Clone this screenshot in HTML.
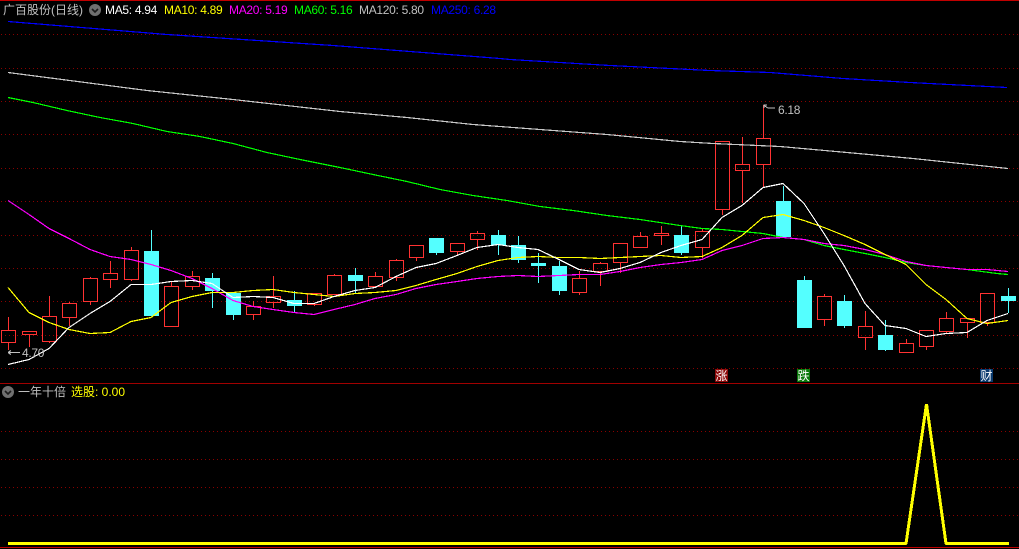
<!DOCTYPE html>
<html>
<head>
<meta charset="utf-8">
<style>
html,body{margin:0;padding:0;background:#000;width:1019px;height:549px;overflow:hidden}
svg{display:block;position:absolute;left:0;top:0}
text{font-family:"Liberation Sans","WenQuanYi Zen Hei","Noto Sans CJK SC",sans-serif;font-size:12px}
.m{letter-spacing:-0.3px}
</style>
</head>
<body>
<svg width="1019" height="549" viewBox="0 0 1019 549">
<rect width="1019" height="549" fill="#000"/>
<!-- frame lines -->
<g shape-rendering="crispEdges">
<rect x="0" y="0" width="1019" height="1" fill="#c00000"/>
<rect x="0" y="383" width="1019" height="1" fill="#a00000"/>
<rect x="0" y="547" width="1019" height="1" fill="#c00000"/>
<path d="M1 34.5H1019M1 68.5H1019M1 101.5H1019M1 134.5H1019M1 168.5H1019M1 201.5H1019M1 235.5H1019M1 268.5H1019M1 301.5H1019M1 335.5H1019M1 368.5H1019M1 431.5H1019M1 459.5H1019M1 487.5H1019M1 515.5H1019" stroke="#8a0000" stroke-width="1" stroke-dasharray="1 3" fill="none"/>
<!-- red wicks -->
<path fill="none" stroke="#ff3232" stroke-width="1" d="M8.5 317V330M8.5 342V350M29.5 334V347M49.5 296V316M49.5 341V343M69.5 302V303M69.5 317V326M90.5 277V278M90.5 301V305M110.5 261V273M110.5 279V288M131.5 247V250M131.5 279V281M171.5 282V286M192.5 271V276M192.5 286V290M253.5 301V306M253.5 314V320M273.5 276V296M273.5 302V308M314.5 304V306M334.5 274V275M375.5 272V276M396.5 259V260M396.5 277V281M416.5 257V261M457.5 251V255M477.5 231V233M477.5 239V250M579.5 271V278M579.5 292V295M600.5 262V263M600.5 271V286M620.5 262V273M640.5 232V236M661.5 226V233M661.5 235V245M702.5 229V231M702.5 247V258M722.5 209V215M742.5 137V164M742.5 170V203M763.5 105V138M763.5 164V187M824.5 294V296M824.5 319V326M865.5 311V326M865.5 337V350M906.5 339V343M926.5 346V350M946.5 312V318M946.5 331V334M967.5 322V338M987.5 322V326"/>
<!-- red bodies -->
<path fill="#ff3232" fill-rule="evenodd" d="M1 330h15v13h-15zM2 331h13v11h-13zM22 331h15v4h-15zM23 332h13v2h-13zM42 316h15v26h-15zM43 317h13v24h-13zM62 303h15v15h-15zM63 304h13v13h-13zM83 278h15v24h-15zM84 279h13v22h-13zM103 273h15v7h-15zM104 274h13v5h-13zM124 250h15v30h-15zM125 251h13v28h-13zM164 286h15v41h-15zM165 287h13v39h-13zM185 276h15v11h-15zM186 277h13v9h-13zM246 306h15v9h-15zM247 307h13v7h-13zM266 296h15v7h-15zM267 297h13v5h-13zM307 293h15v12h-15zM308 294h13v10h-13zM327 275h15v20h-15zM328 276h13v18h-13zM368 276h15v11h-15zM369 277h13v9h-13zM389 260h15v18h-15zM390 261h13v16h-13zM409 245h15v13h-15zM410 246h13v11h-13zM450 243h15v9h-15zM451 244h13v7h-13zM470 233h15v7h-15zM471 234h13v5h-13zM572 278h15v15h-15zM573 279h13v13h-13zM593 263h15v9h-15zM594 264h13v7h-13zM613 243h15v20h-15zM614 244h13v18h-13zM633 236h15v12h-15zM634 237h13v10h-13zM654 233h15v3h-15zM655 234h13v1h-13zM695 231h15v17h-15zM696 232h13v15h-13zM715 141h15v69h-15zM716 142h13v67h-13zM735 164h15v7h-15zM736 165h13v5h-13zM756 138h15v27h-15zM757 139h13v25h-13zM817 296h15v24h-15zM818 297h13v22h-13zM858 326h15v12h-15zM859 327h13v10h-13zM899 343h15v10h-15zM900 344h13v8h-13zM919 330h15v17h-15zM920 331h13v15h-13zM939 318h15v14h-15zM940 319h13v12h-13zM960 318h15v5h-15zM961 319h13v3h-13zM980 293h15v30h-15zM981 294h13v28h-13z"/>
<!-- cyan wicks -->
<path fill="none" stroke="#54ffff" stroke-width="1" d="M151.5 230V251M212.5 273V278M212.5 291V308M233.5 315V320M294.5 291V300M294.5 306V312M355.5 268V275M355.5 281V293M436.5 253V255M498.5 230V235M498.5 245V255M518.5 236V245M518.5 260V263M538.5 253V263M538.5 266V283M559.5 261V266M559.5 291V295M681.5 226V235M681.5 253V255M783.5 186V201M804.5 276V280M844.5 295V301M844.5 326V328M885.5 320V335M885.5 350V351M1008.5 288V296M1008.5 301V313"/>
<!-- cyan bodies -->
<path fill="#54ffff" d="M144 251h15v65h-15zM205 278h15v13h-15zM226 293h15v22h-15zM287 300h15v6h-15zM348 275h15v6h-15zM429 238h15v15h-15zM491 235h15v10h-15zM511 245h15v15h-15zM531 263h15v3h-15zM552 266h15v25h-15zM674 235h15v18h-15zM776 201h15v36h-15zM797 280h15v48h-15zM837 301h15v25h-15zM878 335h15v15h-15zM1001 296h15v5h-15z"/>
<!-- MA250 -->
<polyline fill="none" stroke="#0000ff" stroke-width="1.2" points="8,21.5 167,34.5 333,45.5 500,58.5 510,59.5 610,65.5 710,70.5 770,72.5 843,78.5 910,82.5 1007,87.5"/>
<!-- MA120 -->
<polyline fill="none" stroke="#c8c8c8" stroke-width="1.2" points="8,72.5 147,90.5 233,99.5 340,111.5 407,117.5 473,124.5 540,129.5 607,134.5 680,141.5 713,143.5 780,146.5 847,152.5 913,158.5 1008,168.5"/>
<!-- MA60 -->
<polyline fill="none" stroke="#00ff00" stroke-width="1.2" points="8,97.5 33,102.5 67,110.5 100,117.5 133,123.5 167,131.5 200,136.5 233,143.5 267,152.5 300,159.5 340,167.5 373,174.5 407,181.5 440,189.5 473,195.5 507,200.5 540,206.5 573,210.5 607,215.5 640,219.5 680,225.5 702,228.5 722,229.5 742,231.5 763,233.5 783,237.5 804,239.5 824,245.5 844,249.5 865,253.5 885,257.5 906,262.5 926,265.5 946,267.5 967,269.5 997,273.5 1008,274.5"/>
<!-- MA20 -->
<polyline fill="none" stroke="#ff00ff" stroke-width="1.2" points="8,200.5 29,214.5 49,228.5 69,238.5 90,249.5 110,256.5 131,259.5 151,264.5 171,270.5 192,278.5 212,288.5 233,300.5 253,306.5 273,309.5 294,312.5 314,314.5 334,309.5 355,304.5 375,298.5 396,294.5 416,288.5 436,284.5 457,281.5 477,278.5 498,276.5 518,275.5 538,276.5 559,275.5 579,274.5 600,274.5 620,271.5 640,267.5 661,264.5 681,262.5 702,259.5 722,250.5 742,245.5 763,238.5 783,237.5 804,239.5 824,243.5 844,245.5 865,249.5 885,254.5 906,261.5 926,265.5 946,267.5 967,269.5 987,269.5 1008,271.5"/>
<!-- MA10 -->
<polyline fill="none" stroke="#ffff00" stroke-width="1.2" points="8,287.5 29,312.5 49,322.5 69,329.5 90,333.5 110,332.5 131,321.5 151,317.5 171,302.5 192,296.5 212,292.5 233,292.5 253,290.5 273,289.5 294,292.5 314,294.5 334,296.5 355,293.5 375,292.5 396,290.5 416,285.5 436,279.5 457,273.5 477,266.5 498,260.5 518,257.5 538,256.5 559,257.5 579,257.5 600,258.5 620,257.5 640,256.5 661,255.5 681,257.5 702,256.5 722,247.5 742,235.5 763,217.5 783,214.5 804,220.5 824,227.5 844,235.5 865,244.5 885,254.5 906,264.5 926,284.5 946,299.5 967,318.5 987,323.5 1008,320.5"/>
<!-- MA5 -->
<polyline fill="none" stroke="#ffffff" stroke-width="1.2" points="8,364.5 29,359.5 49,348.5 69,327.5 90,313.5 110,301.5 131,284.5 151,284.5 171,281.5 192,280.5 212,283.5 233,297.5 253,296.5 273,297.5 294,303.5 314,303.5 334,296.5 355,290.5 375,287.5 396,276.5 416,267.5 436,263.5 457,255.5 477,247.5 498,244.5 518,247.5 538,249.5 559,259.5 579,269.5 600,272.5 620,268.5 640,262.5 661,252.5 681,245.5 702,239.5 722,217.5 742,205.5 763,187.5 783,183.5 804,203.5 824,233.5 844,265.5 865,303.5 885,325.5 906,328.5 926,336.5 946,333.5 967,332.5 987,320.5 1008,313.5"/>
<!-- lower panel line -->
<polyline fill="none" stroke="#ffff00" stroke-width="3" stroke-linejoin="bevel" points="8,543.5 906,543.5 926.5,404 946,543.5 1009,543.5"/>
<!-- annotation arrows -->
<path fill="none" stroke="#c0c0c0" stroke-width="1" d="M8 352.5H20M8 352.5l3-2M8 352.5l3 2M764 108V105h3M764 105.5l4 2.5h7"/>
<!-- tags -->
<rect x="715" y="369" width="13" height="13" fill="#8b0a0a"/>
<rect x="797" y="369" width="13" height="13" fill="#0a780a"/>
<rect x="980" y="369" width="13" height="13" fill="#0a3a6e"/>
</g>
<text x="721.5" y="380" fill="#fff" text-anchor="middle">涨</text>
<text x="803.5" y="380" fill="#fff" text-anchor="middle">跌</text>
<text x="986.5" y="380" fill="#fff" text-anchor="middle">财</text>
<text x="22" y="357" fill="#c0c0c0" class="m">4.70</text>
<text x="778" y="114" fill="#c0c0c0" class="m">6.18</text>
<!-- header -->
<text x="3" y="14" fill="#c0c0c0">广百股份(日线)</text>
<circle cx="95" cy="10" r="6" fill="#707070"/>
<path d="M92 9l3 3 3-3" fill="none" stroke="#1c1c1c" stroke-width="1.6"/>
<text x="105" y="14" fill="#ffffff" class="m">MA5: 4.94</text>
<text x="164" y="14" fill="#ffff00" class="m">MA10: 4.89</text>
<text x="229" y="14" fill="#ff00ff" class="m">MA20: 5.19</text>
<text x="294" y="14" fill="#00ff00" class="m">MA60: 5.16</text>
<text x="359" y="14" fill="#c0c0c0" class="m">MA120: 5.80</text>
<text x="431" y="14" fill="#0000ff" class="m">MA250: 6.28</text>
<!-- lower header -->
<circle cx="8" cy="392" r="6" fill="#707070"/>
<path d="M5 391l3 3 3-3" fill="none" stroke="#1c1c1c" stroke-width="1.6"/>
<text x="18" y="396" fill="#c0c0c0">一年十倍</text>
<text x="71" y="396" fill="#ffff00">选股: 0.00</text>
</svg>
</body>
</html>
